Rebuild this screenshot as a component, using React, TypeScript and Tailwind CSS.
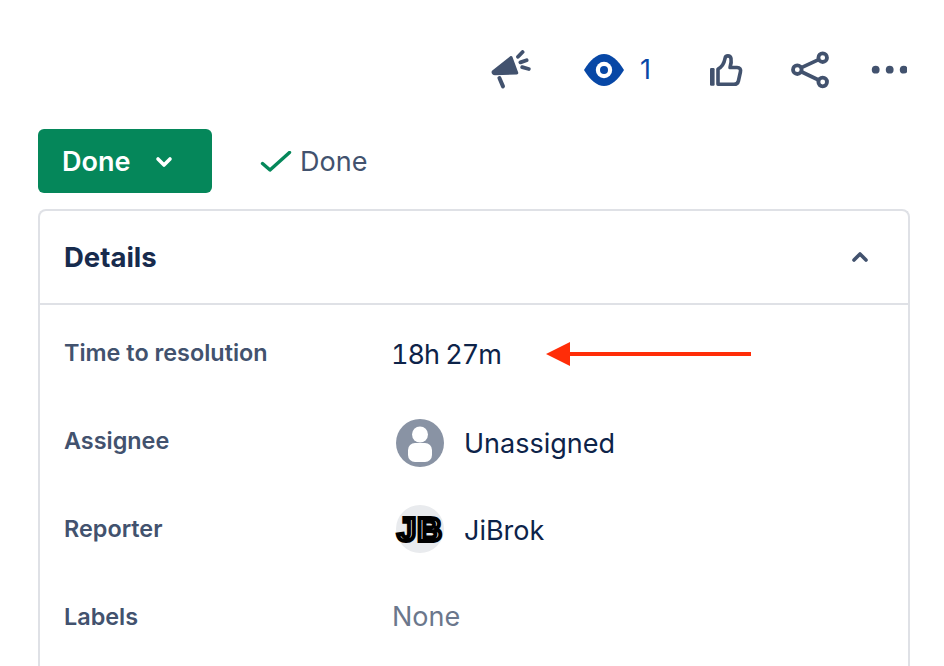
import { ChevronDown, ChevronUp } from "lucide-react";

function Megaphone() {
  return (
    <svg width="42" height="40" viewBox="490 50 42 40" fill="none" className="block">
      <path d="M492.3 70.6 L510 56.4 C511 55.6 512 55.9 512.4 56.8 L518.2 72.4 C518.6 73.6 517.8 74.4 516.8 74.4 L495 75.2 C491.8 75.2 490.6 72 492.3 70.6 Z" fill="#42526E" />
      <path d="M499.4 78 L503 86.4" stroke="#42526E" strokeWidth="4" strokeLinecap="round" />
      <path d="M522.6 52 L518 56.8 M526.6 60.2 L520.4 62.4 M528.8 69 L522.2 67.2" stroke="#42526E" strokeWidth="3.8" strokeLinecap="round" />
    </svg>
  );
}

function Eye() {
  return (
    <svg width="40" height="32" viewBox="584 53 40 32" className="block">
      <path d="M584 69 C590 59 597 53 604 53 C611 53 618 59 624 69 C618 79 611 85 604 85 C597 85 590 79 584 69 Z" fill="#0747A6" />
      <circle cx="604" cy="69" r="8.2" fill="#fff" />
      <circle cx="604" cy="69" r="4" fill="#0747A6" />
    </svg>
  );
}

function Thumb() {
  return (
    <svg width="34" height="34" viewBox="709 52 34 34" fill="none" className="block">
      <rect x="710" y="67" width="4.6" height="17.8" rx="1.2" fill="#42526E" />
      <path d="M718 83.3 V68 C722 66 724.2 62 725 57.5 C725.6 54 730.2 54 731 57.5 C731.6 60.5 731 63.5 730 66.5 H737 C740 66.5 741 68.6 740.4 71 L738.4 80 C737.8 82.5 736.5 83.3 734 83.3 Z" stroke="#42526E" strokeWidth="3.6" strokeLinejoin="round" />
    </svg>
  );
}

function Share() {
  return (
    <svg width="38" height="38" viewBox="791 50 38 38" fill="none" stroke="#42526E" strokeWidth="3.8" className="block">
      <circle cx="822.7" cy="56.7" r="4.3" />
      <circle cx="797.3" cy="68.7" r="4.3" />
      <circle cx="822.7" cy="81" r="4.3" />
      <path d="M801.4 66.6 L818.6 58.6 M801.4 70.8 L818.6 79" />
    </svg>
  );
}

function Dots() {
  return (
    <svg width="36" height="10" viewBox="871 64 36 10" fill="#42526E" className="block">
      <circle cx="875.7" cy="68.7" r="3.9" />
      <circle cx="889.7" cy="68.7" r="3.9" />
      <circle cx="903.7" cy="68.7" r="3.9" />
    </svg>
  );
}

function Row({ label, children }: { label: string; children: React.ReactNode }) {
  return (
    <div className="flex h-[88px] shrink-0 items-center pl-[24px]">
      <div className="mb-[2px] w-[328px] shrink-0 text-[23.4px] font-semibold text-[#42526E]">{label}</div>
      <div className="flex items-center text-[27px] text-[#0D2349]">{children}</div>
    </div>
  );
}

export default function App() {
  return (
    <div className="h-[666px] w-[944px] overflow-hidden bg-white pl-[38px] pr-[34px] font-['Inter',sans-serif]">
      <div className="flex h-[129px] items-start justify-end pt-[50px]">
        <div className="flex items-center">
          <Megaphone />
          <div className="ml-[52px] flex items-center">
            <Eye />
            <span className="ml-[16px] w-[12px] text-[27px] leading-[32px] text-[#0747A6]">1</span>
          </div>
          <div className="ml-[57px]"><Thumb /></div>
          <div className="ml-[48px]"><Share /></div>
          <div className="ml-[42px] mr-[3px]"><Dots /></div>
        </div>
      </div>

      <div className="flex h-[64px] items-center">
        <button className="flex h-[64px] w-[174px] items-center rounded-[6px] bg-[#05875A] pl-[24px] text-[27px] font-semibold text-white">
          <span className="mt-[2px] w-[70px] text-left">Done</span>
          <ChevronDown className="ml-[20px] mt-[2px] h-[24px] w-[24px]" strokeWidth={3.6} />
        </button>
        <svg width="32" height="22" viewBox="260 153 32 22" fill="none" className="ml-[48px] mt-[2px]">
          <path d="M262.5 165.5 L270 172 L289.5 154.5" stroke="#05875A" strokeWidth="3.4" strokeLinecap="round" strokeLinejoin="round" />
        </svg>
        <span className="ml-[8px] mt-[2px] text-[27px] text-[#42526E]">Done</span>
      </div>

      <div className="mt-[16px] h-[500px] rounded-t-[8px] border-2 border-b-0 border-[#DFE1E6]">
        <div className="flex h-[94px] items-center justify-between border-b-2 border-[#DFE1E6] pl-[24px] pr-[36px]">
          <h2 className="mt-[2px] text-[27.5px] font-bold text-[#172B4D]">Details</h2>
          <ChevronUp className="h-[24px] w-[24px] text-[#42526E]" strokeWidth={3.6} />
        </div>
        <div className="flex flex-col pt-[5px]">
          <Row label="Time to resolution">
            <span className="-ml-[1px] mt-[2px] w-[111px] tabular-nums tracking-[-1px] whitespace-nowrap">18h 27m</span>
            <svg width="206" height="26" viewBox="0 0 206 26" className="ml-[44px]">
              <path d="M24 11 H205 V15 H24 V25 L0 13 L24 1 Z" fill="#FF2D08" />
            </svg>
          </Row>
          <Row label="Assignee">
            <svg width="48" height="48" viewBox="0 0 48 48" className="ml-[4px] mt-[2px]">
              <circle cx="24" cy="24" r="24" fill="#8993A4" />
              <circle cx="24" cy="15.5" r="8" fill="#fff" />
              <rect x="12" y="24" width="24" height="19" rx="7" fill="#fff" />
            </svg>
            <span className="ml-[20px] mt-[4px]">Unassigned</span>
          </Row>
          <Row label="Reporter">
            <div className="mb-[2px] ml-[4px] flex h-[48px] w-[48px] items-center justify-center rounded-full bg-[#E9EBEE] font-['Liberation_Sans',sans-serif] text-[34px] font-bold leading-none tracking-[1px] text-white [-webkit-text-stroke:4px_black]">
              JB
            </div>
            <span className="ml-[20px] mt-[2px]">JiBrok</span>
          </Row>
          <Row label="Labels">
            <span className="mb-[2px] text-[#6B778C]">None</span>
          </Row>
        </div>
      </div>
    </div>
  );
}
